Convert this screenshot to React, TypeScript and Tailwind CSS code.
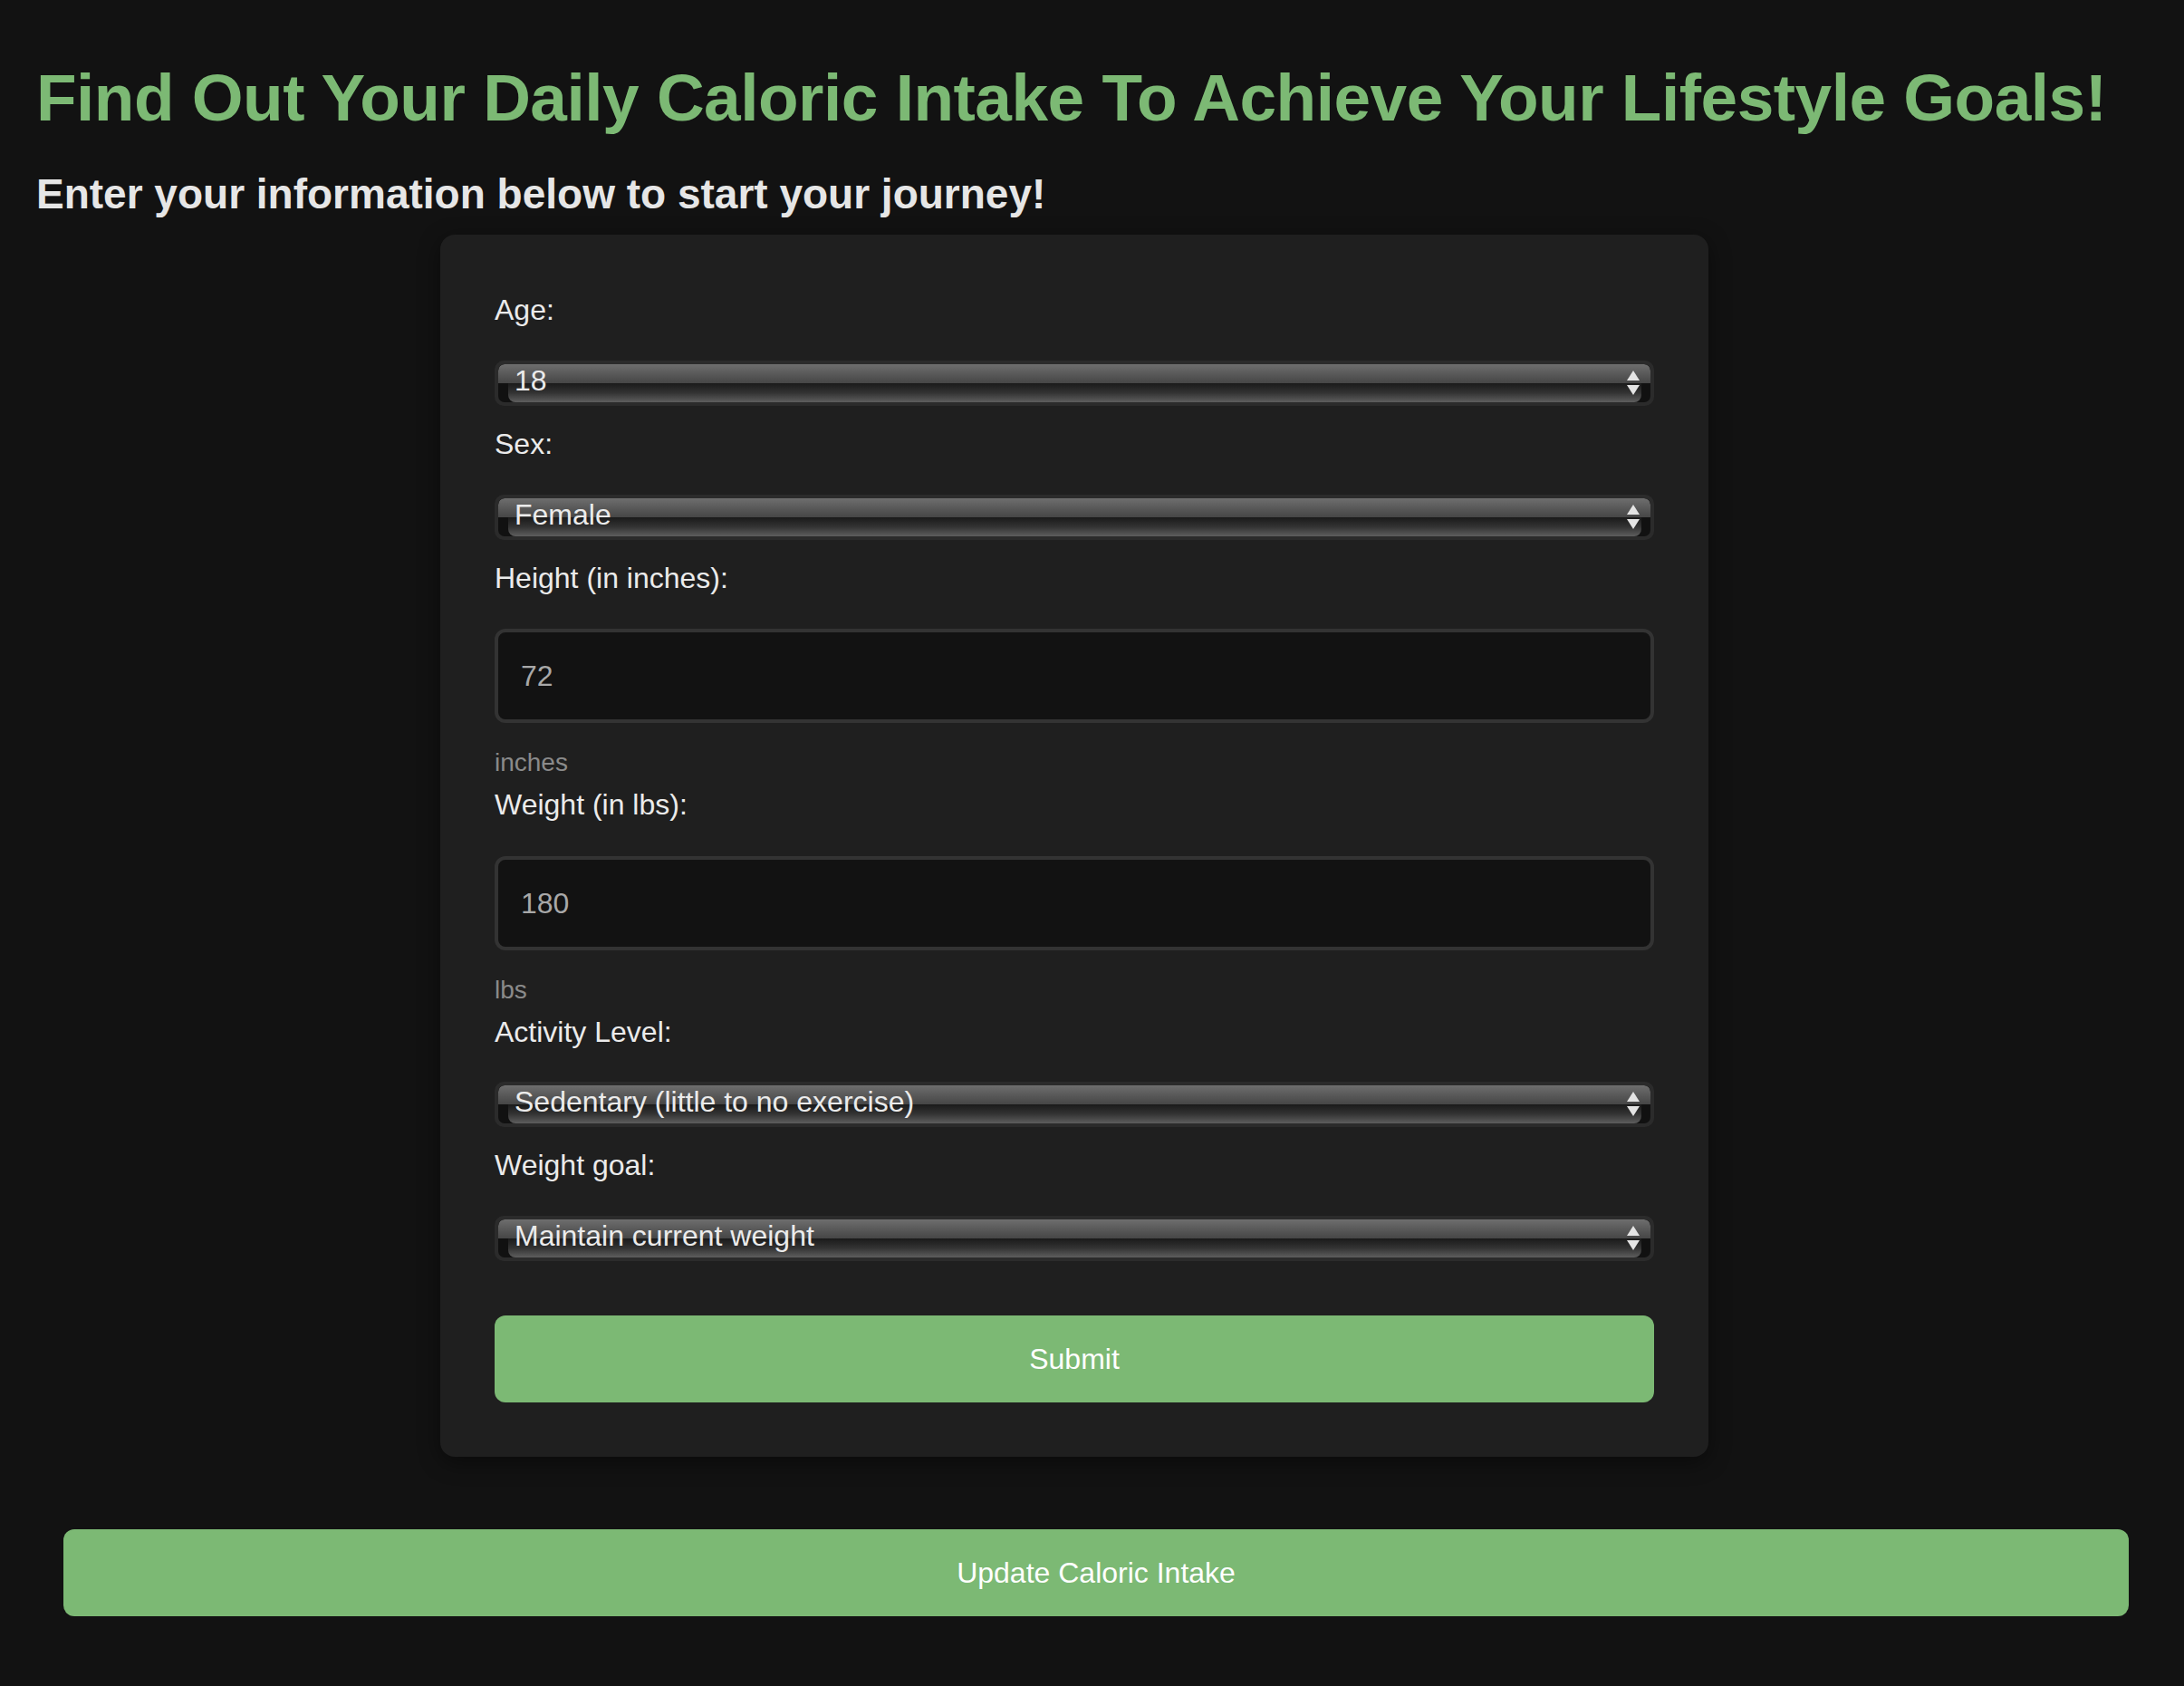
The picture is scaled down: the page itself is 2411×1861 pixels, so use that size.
import React from "react";

const font = { fontFamily: '"Liberation Sans", Arial, Helvetica, sans-serif' };

function Arrows() {
  return (
    <svg className="absolute right-[16px] top-[11px]" width="14" height="28" viewBox="0 0 14 28">
      <polygon points="7,0 14,11 0,11" fill="#e4e4e4" />
      <polygon points="0,16 14,16 7,27" fill="#e4e4e4" />
    </svg>
  );
}

function FakeSelect({ value }: { value: string }) {
  return (
    <div className="relative h-[50px] rounded-[10px] bg-[#2b2b2b] p-[4px]">
      <div className="flex h-full flex-col overflow-hidden rounded-[7px] bg-[#111111]">
        <div className="h-[21px] rounded-t-[7px] bg-linear-to-b from-[#6e6e6e] to-[#464646]" />
        <div className="ml-[11px] mr-[10px] h-[21px] rounded-b-[8px] bg-linear-to-b from-[#1a1a1a] via-[#333333] to-[#5e5e5e]" />
      </div>
      <span className="absolute left-[22px] top-[4px] text-[32px] leading-[36px] text-[#ebebeb]">{value}</span>
      <Arrows />
    </div>
  );
}

function Label({ children, first }: { children: React.ReactNode; first?: boolean }) {
  return (
    <label className={`block text-[32px] leading-[36px] text-[#ebebeb] mb-[38px] ${first ? "" : "mt-[24px]"}`}>
      {children}
    </label>
  );
}

function FakeInput({ value }: { value: string }) {
  return (
    <div className="flex h-[104px] items-center rounded-[12px] border-[4px] border-[#333333] bg-[#121212] pl-[25px]">
      <span className="text-[32px] leading-[36px] text-[#a8a8a8]">{value}</span>
    </div>
  );
}

function Unit({ children }: { children: React.ReactNode }) {
  return <div className="mt-[28px] mb-[12px] text-[28px] leading-[32px] text-[#8a8a8a]">{children}</div>;
}

export default function App() {
  return (
    <div className="min-h-[1861px] bg-[#121212] pb-[78px]" style={font}>
      <div className="pl-[40px]">
        <h1 className="pt-[65px] text-[73px] font-bold leading-[85px] tracking-[-0.5px] text-[#7cb974]">
          Find Out Your Daily Caloric Intake To Achieve Your Lifestyle Goals!
        </h1>
        <h2 className="mt-[38px] text-[46px] font-bold leading-[53px] text-[#e6e6e6]">
          Enter your information below to start your journey!
        </h2>
      </div>
      <div className="mt-[18px] flex justify-center pr-[39px]">
        <div className="w-[1400px] rounded-[16px] bg-[#1f1f1f] px-[60px] pt-[65px] pb-[60px] shadow-[0_6px_24px_rgba(0,0,0,0.45)]">
          <Label first>Age:</Label>
          <FakeSelect value="18" />
          <Label>Sex:</Label>
          <FakeSelect value="Female" />
          <Label>Height (in inches):</Label>
          <FakeInput value="72" />
          <Unit>inches</Unit>
          <label className="block text-[32px] leading-[36px] text-[#ebebeb] mb-[39px]">Weight (in lbs):</label>
          <FakeInput value="180" />
          <Unit>lbs</Unit>
          <label className="block text-[32px] leading-[36px] text-[#ebebeb] mb-[37px]">Activity Level:</label>
          <FakeSelect value="Sedentary (little to no exercise)" />
          <Label>Weight goal:</Label>
          <FakeSelect value="Maintain current weight" />
          <button className="mt-[60px] flex h-[96px] w-full items-center justify-center rounded-[12px] bg-[#7cb974] text-[32px] text-white">
            Submit
          </button>
        </div>
      </div>
      <div className="mt-[80px] pl-[70px] pr-[61px]">
        <button className="flex h-[96px] w-full items-center justify-center rounded-[12px] bg-[#7cb974] text-[32px] text-white">
          Update Caloric Intake
        </button>
      </div>
    </div>
  );
}
